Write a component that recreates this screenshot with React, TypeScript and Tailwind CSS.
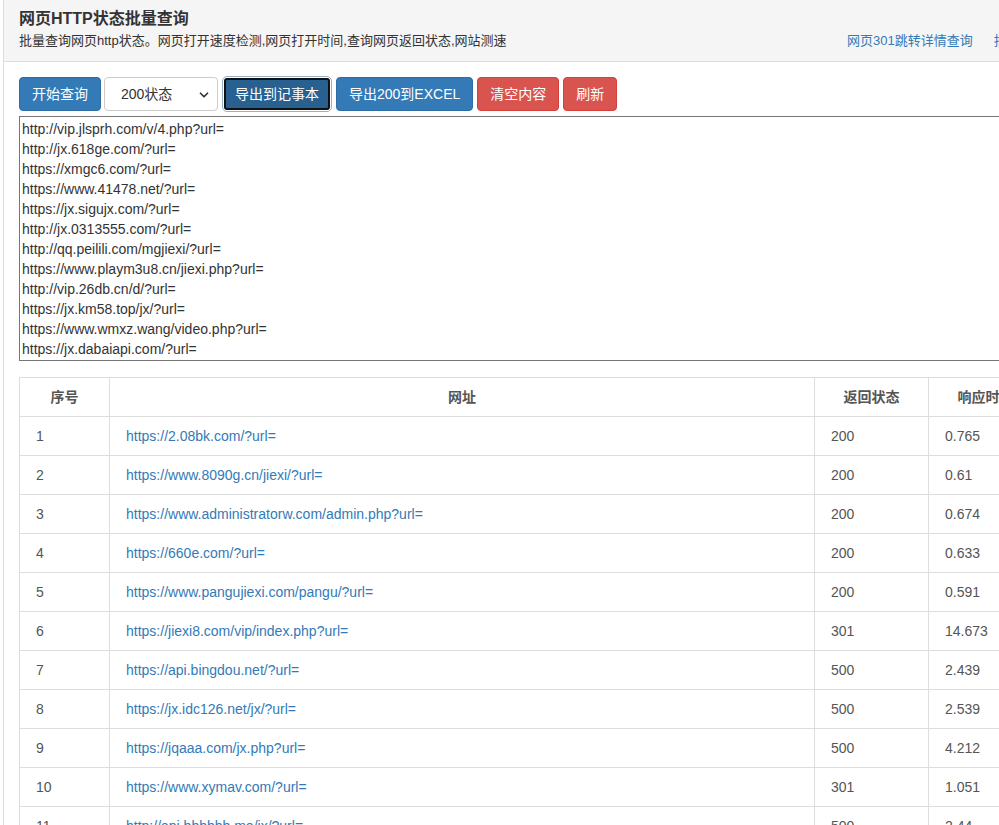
import { ChevronDown } from 'lucide-react';

const urls = [
  'http://vip.jlsprh.com/v/4.php?url=',
  'http://jx.618ge.com/?url=',
  'https://xmgc6.com/?url=',
  'https://www.41478.net/?url=',
  'https://jx.sigujx.com/?url=',
  'http://jx.0313555.com/?url=',
  'http://qq.peilili.com/mgjiexi/?url=',
  'https://www.playm3u8.cn/jiexi.php?url=',
  'http://vip.26db.cn/d/?url=',
  'https://jx.km58.top/jx/?url=',
  'https://www.wmxz.wang/video.php?url=',
  'https://jx.dabaiapi.com/?url=',
];

const results = [
  { url: 'https://2.08bk.com/?url=', code: '200', time: '0.765' },
  { url: 'https://www.8090g.cn/jiexi/?url=', code: '200', time: '0.61' },
  { url: 'https://www.administratorw.com/admin.php?url=', code: '200', time: '0.674' },
  { url: 'https://660e.com/?url=', code: '200', time: '0.633' },
  { url: 'https://www.pangujiexi.com/pangu/?url=', code: '200', time: '0.591' },
  { url: 'https://jiexi8.com/vip/index.php?url=', code: '301', time: '14.673' },
  { url: 'https://api.bingdou.net/?url=', code: '500', time: '2.439' },
  { url: 'https://jx.idc126.net/jx/?url=', code: '500', time: '2.539' },
  { url: 'https://jqaaa.com/jx.php?url=', code: '500', time: '4.212' },
  { url: 'https://www.xymav.com/?url=', code: '301', time: '1.051' },
  { url: 'http://api.bbbbbb.me/jx/?url=', code: '500', time: '2.44' },
];

const font = { fontFamily: '"Liberation Sans", Arial, "Noto Sans CJK SC", sans-serif' };

export default function App() {
  return (
    <div className="w-[999px] h-[825px] overflow-hidden bg-white" style={font}>
      <div className="w-[1300px] ml-[3px] border-l border-[#dddddd] min-h-[825px] text-[#333333]">

        {/* Page header */}
        <div className="bg-[#f5f5f5] border-b border-[#dddddd] h-[62px] pl-[15px] pt-[8px]">
          <h1 className="text-[16px] font-bold leading-[22px] text-[#333333]">网页HTTP状态批量查询</h1>
          <div className="flex items-center mt-[2px] text-[13px] leading-[18px]">
            <p className="w-[828px]">批量查询网页http状态。网页打开速度检测,网页打开时间,查询网页返回状态,网站测速</p>
            <div className="flex gap-[21px] text-[#337ab7]">
              <a href="#">网页301跳转详情查询</a>
              <a href="#">批量查询网页标题</a>
            </div>
          </div>
        </div>

        <div className="pl-[15px] pt-[15px]">
          {/* Toolbar */}
          <div className="flex items-center gap-1 h-[34px]">
            <button className="h-[34px] px-3 rounded bg-[#337ab7] border border-[#2e6da4] text-white text-[14px]">开始查询</button>
            <div className="relative -ml-[1px] h-[34px] w-[114px] rounded border border-[#cccccc] bg-white flex items-center pl-[16px] text-[14px] text-[#333333]">
              200状态
              <ChevronDown className="absolute right-[6px] top-[10px] w-[14px] h-[14px] text-[#333333]" strokeWidth={3} />
            </div>
            <div className="rounded-[5px] border border-[#9ab0c6] p-[1px]">
              <button className="h-[32px] px-[9px] rounded-[3px] bg-[#286090] border-2 border-[#111111] text-white text-[14px]">导出到记事本</button>
            </div>
            <button className="h-[34px] px-3 rounded bg-[#337ab7] border border-[#2e6da4] text-white text-[14px]">导出200到EXCEL</button>
            <button className="h-[34px] px-3 rounded bg-[#d9534f] border border-[#d43f3a] text-white text-[14px]">清空内容</button>
            <button className="h-[34px] px-3 rounded bg-[#d9534f] border border-[#d43f3a] text-white text-[14px]">刷新</button>
          </div>

          {/* URL list */}
          <textarea
            className="block mt-[5px] w-[1260px] h-[245px] border border-[#767676] px-[2px] pt-[2px] text-[14px] leading-[20px] text-[#333333] resize-none outline-none"
            style={font}
            defaultValue={urls.join('\n')}
          />

          {/* Results */}
          <table className="mt-[16px] w-[1260px] border-collapse text-[14px]">
            <thead>
              <tr className="h-[39px]">
                <th className="w-[90px] border border-[#dddddd] font-bold text-[#555555]">序号</th>
                <th className="w-[705px] border border-[#dddddd] font-bold text-[#555555]">网址</th>
                <th className="w-[114px] border border-[#dddddd] font-bold text-[#555555]">返回状态</th>
                <th className="w-[114px] border border-[#dddddd] font-bold text-[#555555]">响应时间</th>
                <th className="border border-[#dddddd] font-bold text-[#555555]">操作</th>
              </tr>
            </thead>
            <tbody>
              {results.map((r, i) => (
                <tr key={i} className="h-[39px]">
                  <td className="border border-[#dddddd] pl-4 text-[#555555]">{i + 1}</td>
                  <td className="border border-[#dddddd] pl-4 text-[#337ab7]">{r.url}</td>
                  <td className="border border-[#dddddd] pl-4 text-[#555555]">{r.code}</td>
                  <td className="border border-[#dddddd] pl-4 text-[#555555]">{r.time}</td>
                  <td className="border border-[#dddddd] pl-4 text-[#555555]"></td>
                </tr>
              ))}
            </tbody>
          </table>
        </div>
      </div>
    </div>
  );
}
